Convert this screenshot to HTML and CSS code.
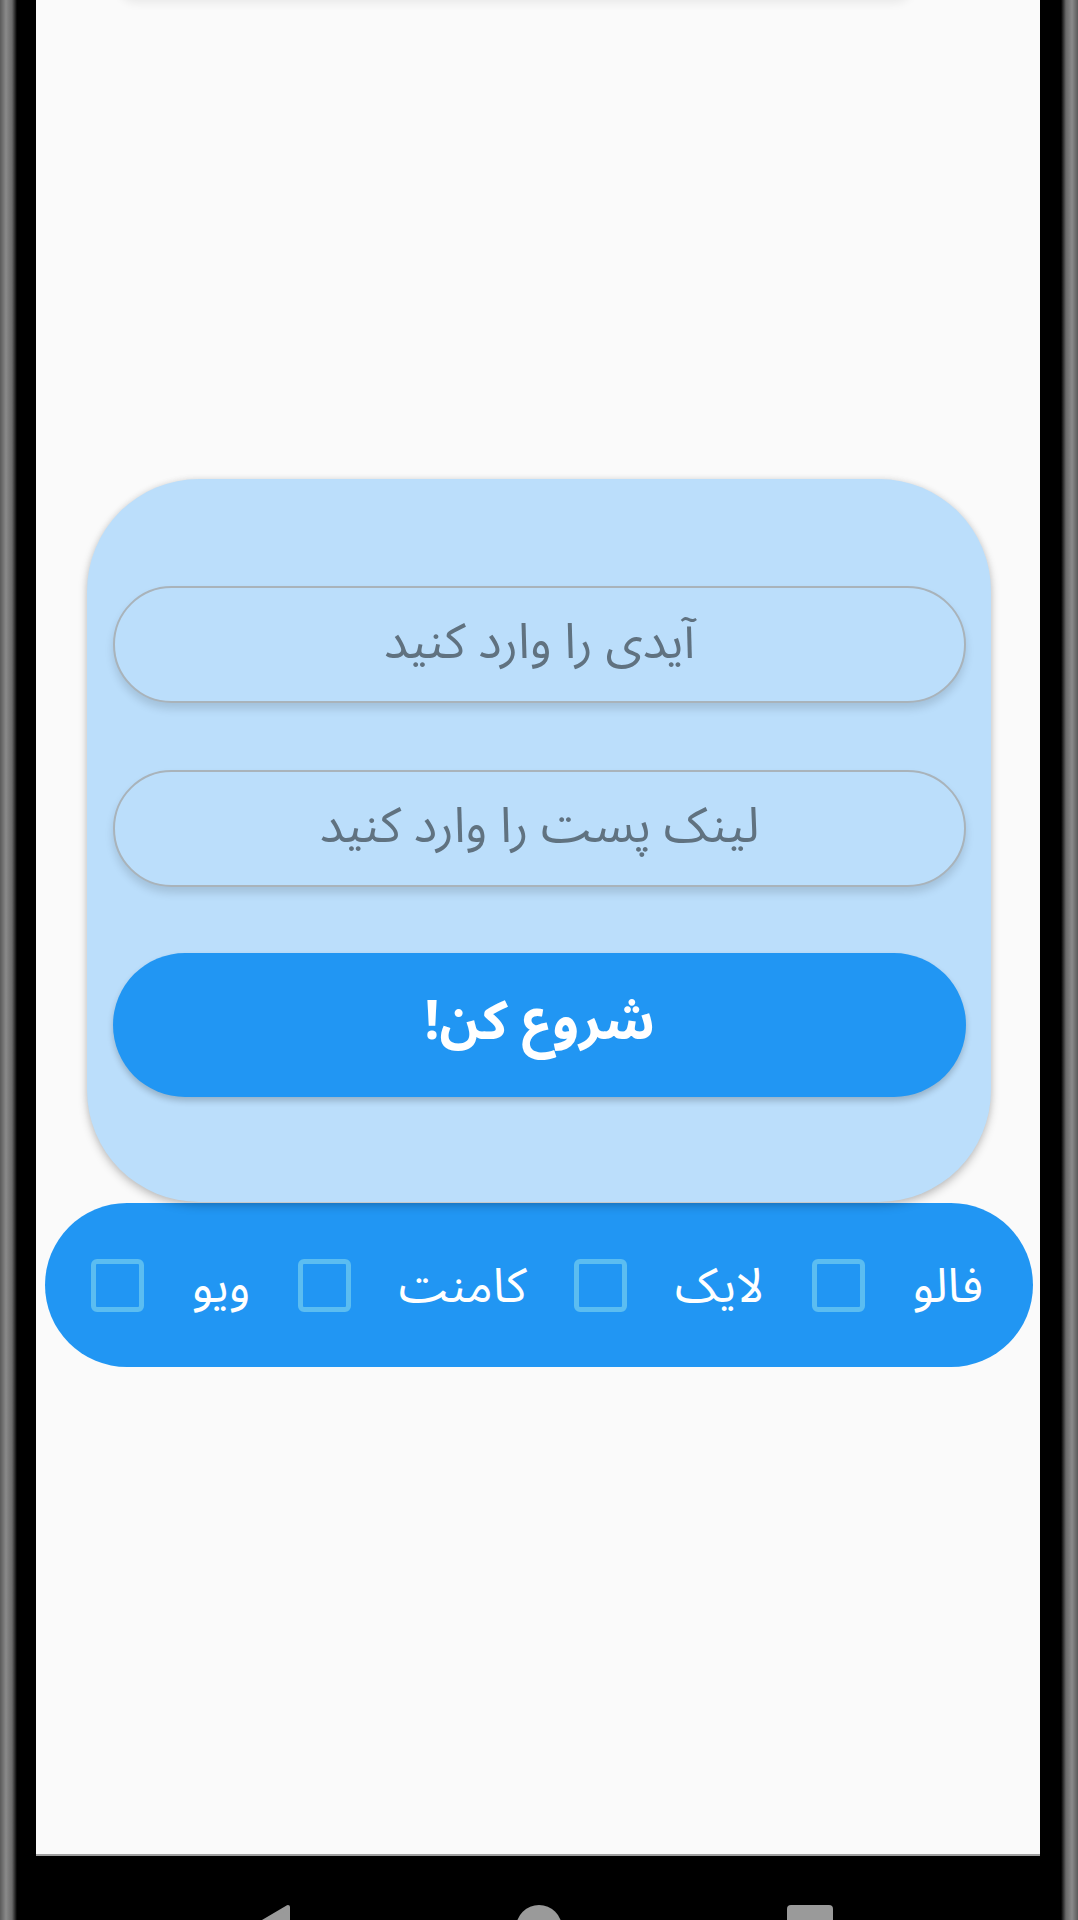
FILE: index.html
```html
<!DOCTYPE html>
<html lang="fa">
<head>
<meta charset="utf-8">
<title>Start</title>
<link rel="stylesheet" href="styles.css">
</head>
<body>
<div class="device">
  <div class="screen">
    <div class="prev-card"></div>
    <div class="card">
      <div class="field"><span class="placeholder">آیدی را وارد کنید</span></div>
      <div class="field"><span class="placeholder">لینک پست را وارد کنید</span></div>
      <button class="start">شروع کن!</button>
    </div>
    <div class="options" dir="rtl">
      <span class="opt-label">فالو</span>
      <span class="box"></span>
      <span class="opt-label">لایک</span>
      <span class="box"></span>
      <span class="opt-label">کامنت</span>
      <span class="box"></span>
      <span class="opt-label">ویو</span>
      <span class="box"></span>
    </div>
  </div>
  <div class="navbar">
    <svg class="nav-back" width="40" height="46" viewBox="0 0 40 46"><path d="M38 2 L4 22 L38 44 Z" fill="#9a9a9a" stroke="#9a9a9a" stroke-width="4" stroke-linejoin="round"/></svg>
    <span class="nav-home"></span>
    <span class="nav-recent"></span>
  </div>
</div>
</body>
</html>
```

FILE: styles.css
```css
html, body {
  margin: 0;
  padding: 0;
  background: #000;
}
body {
  width: 1078px;
  height: 1920px;
  overflow: hidden;
  font-family: "Noto Sans Arabic", "Noto Naskh Arabic", "DejaVu Sans", sans-serif;
}
.device {
  width: 1078px;
  height: 1920px;
  box-sizing: border-box;
  padding: 0 38px 0 36px;
  background:
    linear-gradient(to right, #5a5a5a 0, #8a8a8a 6px, #6a6a6a 12px, #000 17px, #000 1061px, #6a6a6a 1066px, #8a8a8a 1072px, #5a5a5a 1078px);
  display: flex;
  flex-direction: column;
}
.screen {
  width: 1004px;
  height: 1856px;
  box-sizing: border-box;
  background: #fafafa;
  border-bottom: 2px solid #9e9e9e;
  overflow: hidden;
  display: flex;
  flex-direction: column;
}
.prev-card {
  height: 20px;
  margin: -20px 126px 0 81px;
  border-radius: 0 0 40px 40px;
  background: #fafafa;
  box-shadow: 0 3px 10px rgba(0, 0, 0, 0.07);
  flex: none;
}
.card {
  position: relative;
  z-index: 2;
  margin: 479px 49px 0 51px;
  height: 723px;
  box-sizing: border-box;
  padding: 107px 25px 0 26px;
  background: #bbdefb;
  border-radius: 112px;
  box-shadow: 0 4px 10px rgba(0, 0, 0, 0.22), 0 0 6px rgba(0, 0, 0, 0.08);
  display: flex;
  flex-direction: column;
  flex: none;
}
.field {
  height: 117px;
  box-sizing: border-box;
  border: 2px solid #a9b3ba;
  border-radius: 59px;
  background: #bbdefb;
  box-shadow: 0 6px 8px rgba(0, 0, 0, 0.13);
  display: flex;
  align-items: center;
  justify-content: center;
  margin-bottom: 67px;
}
.field + .field {
  margin-bottom: 66px;
}
.placeholder {
  direction: rtl;
  font-size: 49px;
  color: #607280;
  padding-bottom: 4px;
}
.start {
  height: 144px;
  border: none;
  border-radius: 72px;
  background: #2196f3;
  color: #fff;
  font-family: inherit;
  font-size: 54px;
  font-weight: bold;
  direction: rtl;
  box-shadow: 0 4px 6px rgba(0, 0, 0, 0.2);
  padding: 0 0 6px;
}
.options {
  position: relative;
  z-index: 1;
  margin: 1px 7px 0 9px;
  height: 164px;
  box-sizing: border-box;
  border-radius: 82px;
  background: #2196f3;
  display: flex;
  align-items: center;
  justify-content: space-between;
  padding: 0 50px 0 46px;
  flex: none;
}
.opt-label {
  color: #fff;
  font-size: 48px;
  padding-top: 2px;
}
.box {
  width: 53px;
  height: 53px;
  box-sizing: border-box;
  border: 5px solid #5bbdf1;
  border-radius: 6px;
}
.navbar {
  height: 64px;
  box-sizing: border-box;
  padding: 49px 0 0 214px;
  display: flex;
  align-items: flex-start;
  overflow: hidden;
}
.nav-back {
  flex: none;
}
.nav-home {
  width: 46px;
  height: 46px;
  border-radius: 50%;
  background: #9a9a9a;
  margin-left: 226px;
  flex: none;
}
.nav-recent {
  width: 46px;
  height: 46px;
  border-radius: 4px;
  background: #9a9a9a;
  margin-left: 225px;
  flex: none;
}
```
